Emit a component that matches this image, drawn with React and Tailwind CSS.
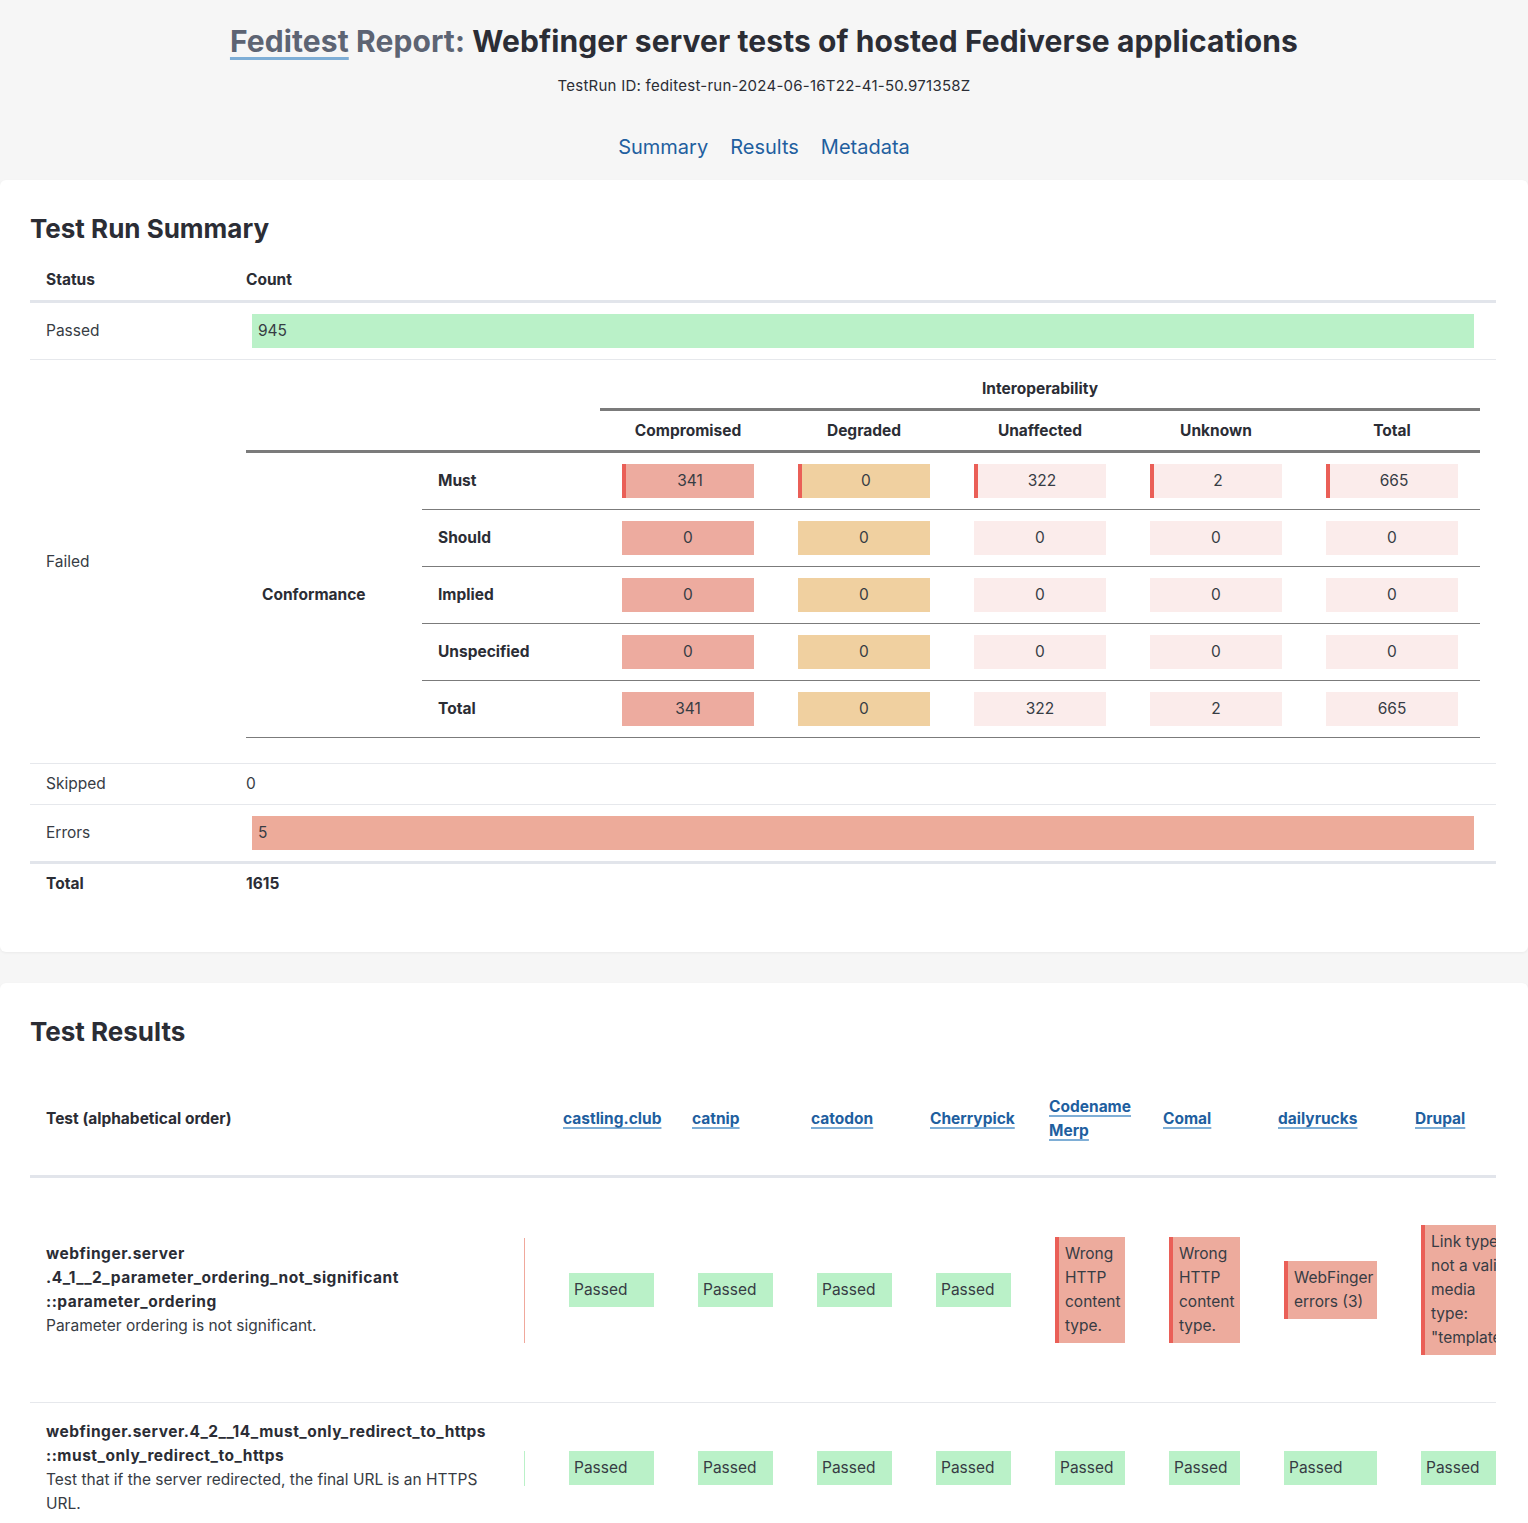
import React from "react";

const COLS = [
  { name: "castling.club", w: "w-[129px]" },
  { name: "catnip", w: "w-[119px]" },
  { name: "catodon", w: "w-[119px]" },
  { name: "Cherrypick", w: "w-[119px]" },
  { name: "Codename Merp", w: "w-[114px]", lines: ["Codename", "Merp"] },
  { name: "Comal", w: "w-[115px]" },
  { name: "dailyrucks", w: "w-[137px]" },
  { name: "Drupal", w: "w-[144px]" },
];

function Passed() {
  return (
    <div className="w-full bg-[#baf1c8] pl-[5px] py-[5px] leading-[24px]">Passed</div>
  );
}

function Fail({ lines }) {
  return (
    <div className="w-full bg-[#edab9d] border-l-4 border-[#ea5f57] pl-[6px] pr-[4px] py-[5px] leading-[24px] whitespace-nowrap overflow-hidden">
      {lines.map((l, i) => (
        <div key={i}>{l}</div>
      ))}
    </div>
  );
}

function Box({ v, kind, mark }) {
  const bg =
    kind === "c" ? "bg-[#edab9f]" : kind === "d" ? "bg-[#f0d0a0]" : "bg-[#fbeceb]";
  return (
    <div className="w-[176px] flex items-center justify-center">
      <div
        className={
          "w-[132px] h-[34px] flex items-center justify-center " +
          bg +
          (mark ? " border-l-4 border-[#ea5f57]" : "")
        }
      >
        {v}
      </div>
    </div>
  );
}

const ROWS = [
  { label: "Must", vals: ["341", "0", "322", "2", "665"], mark: true },
  { label: "Should", vals: ["0", "0", "0", "0", "0"] },
  { label: "Implied", vals: ["0", "0", "0", "0", "0"] },
  { label: "Unspecified", vals: ["0", "0", "0", "0", "0"] },
  { label: "Total", vals: ["341", "0", "322", "2", "665"], last: true },
];
const KINDS = ["c", "d", "u", "u", "u"];

export default function App() {
  return (
    <div className="min-h-screen bg-[#f6f6f6] font-['Inter',sans-serif] text-[15.5px] text-[#373c44] pb-10">
      <header className="h-[179px] flex flex-col items-center">
        <h1 className="mt-[21px] text-[30px] leading-[40px] font-bold text-[#2b2d35] tracking-[0.1px]">
          <a className="text-[#5d6473] underline decoration-[#7eaed6] decoration-[3px] underline-offset-[5px]">
            Feditest
          </a>
          <span className="text-[#5d6473]"> Report:</span> Webfinger server tests of hosted Fediverse applications
        </h1>
        <p className="mt-[15px] text-[15px] tracking-[0.25px] leading-[20px] text-[#2b2d35]">
          TestRun ID: feditest-run-2024-06-16T22-41-50.971358Z
        </p>
        <nav className="mt-[37px] flex gap-[22px] text-[20px] leading-[28px] text-[#1f5f9f]">
          <a>Summary</a>
          <a>Results</a>
          <a>Metadata</a>
        </nav>
      </header>

      <section className="mt-px h-[772px] bg-white rounded-md shadow-[0_1px_3px_rgba(0,0,0,0.05)] pl-[30px] pr-[32px] pt-[33px]">
        <h2 className="text-[26px] leading-[32px] font-bold text-[#2b2d35]">Test Run Summary</h2>
        <div className="mt-[15px]">
          <div className="flex h-[43px] items-center border-b-[3px] border-[#e2e5eb] font-bold text-[#2b2d35]">
            <div className="w-[200px] pl-4">Status</div>
            <div className="pl-4">Count</div>
          </div>
          <div className="flex h-[57px] items-center border-b border-[#e6e8ec]">
            <div className="w-[200px] pl-4">Passed</div>
            <div className="flex-1 px-4">
              <div className="mx-[6px] h-[34px] bg-[#baf1c8] pl-[6px] flex items-center">945</div>
            </div>
          </div>
          <div className="flex border-b border-[#e6e8ec]">
            <div className="w-[200px] pl-4 flex items-center">Failed</div>
            <div className="flex-1 px-4 pt-[10px] pb-[25px]">
              <div className="flex h-[41px]">
                <div className="w-[354px]" />
                <div className="w-[880px] border-b-[3px] border-[#7b7b7b] flex items-center justify-center font-bold text-[#2b2d35]">
                  Interoperability
                </div>
              </div>
              <div className="flex h-[42px] border-b-[3px] border-[#7b7b7b] items-center font-bold text-[#2b2d35]">
                <div className="w-[354px]" />
                {["Compromised", "Degraded", "Unaffected", "Unknown", "Total"].map((h) => (
                  <div key={h} className="w-[176px] text-center">
                    {h}
                  </div>
                ))}
              </div>
              <div className="flex border-b border-[#7b7b7b]">
                <div className="w-[176px] pl-4 flex items-center font-bold text-[#2b2d35]">Conformance</div>
                <div className="flex flex-col">
                  {ROWS.map((r) => (
                    <div
                      key={r.label}
                      className={
                        "flex " + (r.last ? "h-[56px]" : "h-[57px] border-b border-[#7b7b7b]")
                      }
                    >
                      <div className="w-[178px] pl-4 flex items-center font-bold text-[#2b2d35]">
                        {r.label}
                      </div>
                      {r.vals.map((v, i) => (
                        <Box key={i} v={v} kind={KINDS[i]} mark={r.mark} />
                      ))}
                    </div>
                  ))}
                </div>
              </div>
            </div>
          </div>
          <div className="flex h-[41px] items-center border-b border-[#e6e8ec]">
            <div className="w-[200px] pl-4">Skipped</div>
            <div className="pl-4">0</div>
          </div>
          <div className="flex h-[59px] items-center border-b-[3px] border-[#e2e5eb]">
            <div className="w-[200px] pl-4">Errors</div>
            <div className="flex-1 px-4">
              <div className="mx-[6px] h-[34px] bg-[#edab9a] pl-[6px] flex items-center">5</div>
            </div>
          </div>
          <div className="flex h-[40px] items-center font-bold text-[#2b2d35]">
            <div className="w-[200px] pl-4">Total</div>
            <div className="pl-4">1615</div>
          </div>
        </div>
      </section>

      <section className="mt-[31px] bg-white rounded-md shadow-[0_1px_3px_rgba(0,0,0,0.05)] pl-[30px] pr-[32px] pt-[33px] pb-10">
        <h2 className="text-[26px] leading-[32px] font-bold text-[#2b2d35]">Test Results</h2>
        <div className="mt-[15px] overflow-hidden">
          <div className="w-max">
            <div className="flex h-[115px] items-center border-b-[3px] border-[#e2e5eb]">
              <div className="w-[517px] pl-4 font-bold text-[#2b2d35]">Test (alphabetical order)</div>
              {COLS.map((c) => (
                <div key={c.name} className={c.w + " pl-4 leading-[24px]"}>
                  {(c.lines || [c.name]).map((l, i) => (
                    <div key={i}>
                      <a className="font-bold text-[#1f5f9f] underline decoration-[#7eaed6] decoration-[1.5px] underline-offset-[3px]">
                        {l}
                      </a>
                    </div>
                  ))}
                </div>
              ))}
            </div>

            <div className="flex h-[225px] items-center border-b border-[#e6e8ec]">
              <div className="w-[517px] pl-4 pr-[22px] flex items-center justify-between">
                <div className="leading-[24px]">
                  <div className="font-bold text-[#2b2d35] tracking-[0.5px]">webfinger.server</div>
                  <div className="font-bold text-[#2b2d35] tracking-[0.5px]">.4_1__2_parameter_ordering_not_significant</div>
                  <div className="font-bold text-[#2b2d35] tracking-[0.5px]">::parameter_ordering</div>
                  <div>Parameter ordering is not significant.</div>
                </div>
                <div className="w-px h-[105px] bg-[#f0a89c]" />
              </div>
              <div className="w-[129px] px-[22px] flex items-center"><Passed /></div>
              <div className="w-[119px] px-[22px] flex items-center"><Passed /></div>
              <div className="w-[119px] px-[22px] flex items-center"><Passed /></div>
              <div className="w-[119px] px-[22px] flex items-center"><Passed /></div>
              <div className="w-[114px] px-[22px] flex items-center">
                <Fail lines={["Wrong", "HTTP", "content", "type."]} />
              </div>
              <div className="w-[115px] px-[22px] flex items-center">
                <Fail lines={["Wrong", "HTTP", "content", "type."]} />
              </div>
              <div className="w-[137px] px-[22px] flex items-center">
                <Fail lines={["WebFinger", "errors (3)"]} />
              </div>
              <div className="w-[144px] px-[22px] flex items-center">
                <Fail lines={["Link type is", "not a valid", "media", "type:", "\"template\""]} />
              </div>
            </div>

            <div className="flex h-[130px] items-center">
              <div className="w-[517px] pl-4 pr-[22px] flex items-center justify-between">
                <div className="leading-[24px]">
                  <div className="font-bold text-[#2b2d35] tracking-[0.5px]">webfinger.server.4_2__14_must_only_redirect_to_https</div>
                  <div className="font-bold text-[#2b2d35] tracking-[0.5px]">::must_only_redirect_to_https</div>
                  <div>Test that if the server redirected, the final URL is an HTTPS</div>
                  <div>URL.</div>
                </div>
                <div className="w-px h-[35px] bg-[#baf1c8]" />
              </div>
              <div className="w-[129px] px-[22px] flex items-center"><Passed /></div>
              <div className="w-[119px] px-[22px] flex items-center"><Passed /></div>
              <div className="w-[119px] px-[22px] flex items-center"><Passed /></div>
              <div className="w-[119px] px-[22px] flex items-center"><Passed /></div>
              <div className="w-[114px] px-[22px] flex items-center"><Passed /></div>
              <div className="w-[115px] px-[22px] flex items-center"><Passed /></div>
              <div className="w-[137px] px-[22px] flex items-center"><Passed /></div>
              <div className="w-[144px] px-[22px] flex items-center"><Passed /></div>
            </div>
          </div>
        </div>
      </section>
    </div>
  );
}
